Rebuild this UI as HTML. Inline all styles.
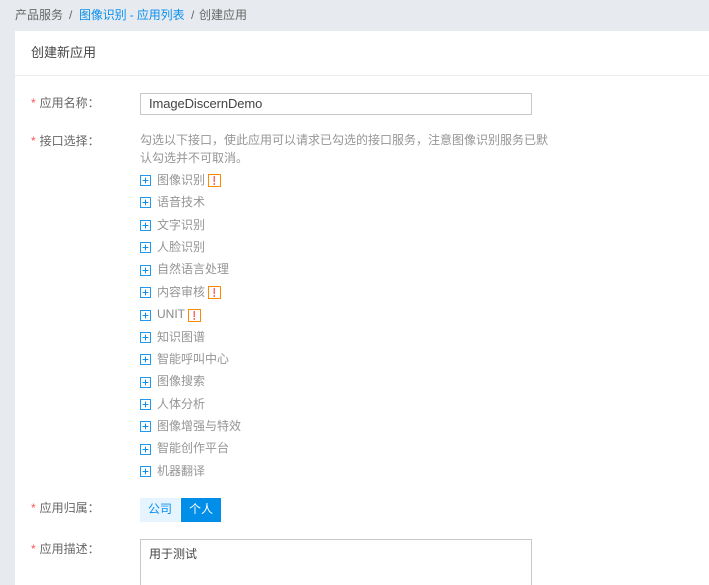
<!DOCTYPE html>
<html><head><meta charset="utf-8">
<style>
html,body{margin:0;padding:0;width:709px;height:585px;overflow:hidden;background:#e7ebef;}
body{position:relative;font-family:"Liberation Sans","Noto Sans CJK SC",sans-serif;font-size:12px;color:#666;}
.a{position:absolute;white-space:nowrap;line-height:18px;}
.panel{position:absolute;left:15px;top:31px;width:694px;height:554px;background:#fff;}
.hr{position:absolute;left:15px;top:75px;width:694px;height:1px;background:#ebebeb;}
.box{position:absolute;box-sizing:border-box;border:1px solid #c8c8c8;background:#fff;}
.lab{color:#666;left:31px;}
.lab i{font-style:normal;color:#f55;margin-right:4px;}
.ic{position:absolute;left:140px;width:11px;height:11px;box-sizing:border-box;border:1px solid #1f98f0;}
.ic:before{content:"";position:absolute;left:1px;top:4px;width:7px;height:1px;background:linear-gradient(90deg,#a5d6f9 1px,#0a8fee 1px,#0a8fee 6px,#a5d6f9 6px);}
.ic:after{content:"";position:absolute;left:4px;top:1px;width:1px;height:7px;background:linear-gradient(180deg,#a5d6f9 1px,#0a8fee 1px,#0a8fee 6px,#a5d6f9 6px);}
.t{left:157px;color:#959595;}
.w{position:absolute;width:13px;height:13px;box-sizing:border-box;border:1px solid #f80;}
.w:after{content:"";position:absolute;left:5px;top:1px;width:1px;height:6px;background:#f66;box-shadow:-1px 0 0 #fbb;}
.w:before{content:"";position:absolute;left:5px;top:8px;width:1px;height:2px;background:#f66;box-shadow:-1px 0 0 #fbb;}
</style></head><body>
<div class="a" style="left:15px;top:6px">产品服务</div>
<div class="a" style="left:69px;top:6px">/</div>
<div class="a" style="left:79px;top:6px;color:#0a8fee;letter-spacing:-0.12px">图像识别 - 应用列表</div>
<div class="a" style="left:191px;top:6px">/</div>
<div class="a" style="left:199px;top:6px">创建应用</div>
<div class="panel"></div>
<div class="hr"></div>
<div class="a" style="left:31px;top:44px;color:#444;font-size:13px">创建新应用</div>

<div class="a lab" style="top:94px"><i>*</i>应用名称：</div>
<div class="box" style="left:140px;top:93px;width:392px;height:22px"></div>
<div class="a" style="left:149px;top:95px;color:#444;font-size:13px;letter-spacing:-0.1px">ImageDiscernDemo</div>

<div class="a lab" style="top:132px"><i>*</i>接口选择：</div>
<div class="a" style="left:140px;top:131px;color:#959595">勾选以下接口，使此应用可以请求已勾选的接口服务，注意图像识别服务已默</div>
<div class="a" style="left:140px;top:149px;color:#959595">认勾选并不可取消。</div>

<div class="ic" style="top:175px"></div><div class="a t" style="top:171px">图像识别</div><div class="w" style="left:208px;top:174px"></div>
<div class="ic" style="top:197px"></div><div class="a t" style="top:193px">语音技术</div>
<div class="ic" style="top:220px"></div><div class="a t" style="top:216px">文字识别</div>
<div class="ic" style="top:242px"></div><div class="a t" style="top:238px">人脸识别</div>
<div class="ic" style="top:265px"></div><div class="a t" style="top:260px">自然语言处理</div>
<div class="ic" style="top:287px"></div><div class="a t" style="top:283px">内容审核</div><div class="w" style="left:208px;top:286px"></div>
<div class="ic" style="top:310px"></div><div class="a t" style="top:305px;color:#888">UNIT</div><div class="w" style="left:188px;top:309px"></div>
<div class="ic" style="top:332px"></div><div class="a t" style="top:328px">知识图谱</div>
<div class="ic" style="top:354px"></div><div class="a t" style="top:350px">智能呼叫中心</div>
<div class="ic" style="top:377px"></div><div class="a t" style="top:372px">图像搜索</div>
<div class="ic" style="top:399px"></div><div class="a t" style="top:395px">人体分析</div>
<div class="ic" style="top:421px"></div><div class="a t" style="top:417px">图像增强与特效</div>
<div class="ic" style="top:444px"></div><div class="a t" style="top:439px">智能创作平台</div>
<div class="ic" style="top:466px"></div><div class="a t" style="top:462px">机器翻译</div>

<div class="a lab" style="top:499px"><i>*</i>应用归属：</div>
<div class="a" style="left:140px;top:498px;width:40px;height:24px;line-height:23px;text-align:center;background:#e5f4ff;color:#0a8fee">公司</div>
<div class="a" style="left:181px;top:498px;width:40px;height:24px;line-height:23px;text-align:center;background:#008ee8;color:#fff">个人</div>

<div class="a lab" style="top:540px"><i>*</i>应用描述：</div>
<div class="box" style="left:140px;top:539px;width:392px;height:60px"></div>
<div class="a" style="left:149px;top:545px;color:#444">用于测试</div>
</body></html>
